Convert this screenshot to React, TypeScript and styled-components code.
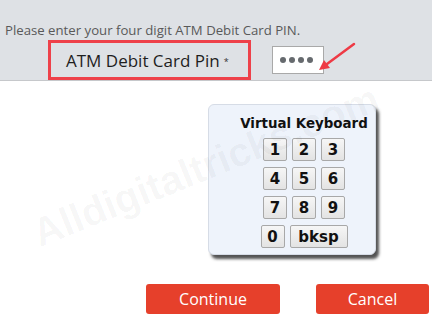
import styled, { createGlobalStyle } from "styled-components";

const GlobalStyle = createGlobalStyle`
    html, body {
        margin: 0;
        padding: 0;
        background: #ffffff;
    }
    body {
        font-family: "Open Sans", "Noto Sans", sans-serif;
    }
`

const Page = styled.div`
    position: relative;
    width: 432px;
    height: 333px;
    overflow: hidden;
    background: #ffffff;
`

// Cabecera gris con el texto y el campo del PIN

const Header = styled.div`
    position: relative;
    height: 81px;
    box-sizing: border-box;
    padding: 21px 0 0 5px;
    background: #dee1e5;
    border-bottom: 1px solid #c6c8cb;
`

const Hint = styled.div`
    font-size: 13.2px;
    line-height: 18px;
    color: #595959;
    white-space: nowrap;
`

const PinRow = styled.div`
    display: flex;
    align-items: center;
    margin: 1px 0 0 43px;
`

const LabelBox = styled.div`
    display: flex;
    align-items: flex-start;
    box-sizing: border-box;
    width: 203px;
    height: 40px;
    padding: 8px 0 0 15px;
    border: 3px solid #ee414a;
`

const Label = styled.span`
    font-size: 17px;
    line-height: 20px;
    color: #1e1e1e;
`

const Required = styled.span`
    font-size: 9px;
    line-height: 9px;
    margin: 6px 0 0 4px;
    color: #333;
`

const PinInput = styled.div`
    display: flex;
    align-items: center;
    gap: 3px;
    box-sizing: border-box;
    width: 52px;
    height: 28px;
    margin-left: 21px;
    padding-left: 7px;
    background: #ffffff;
    border: 1px solid #a9a9a9;
`

const Dot = styled.span`
    width: 6px;
    height: 6px;
    border-radius: 50%;
    background: #666a6e;
`

const Arrow = styled.svg`
    position: absolute;
    left: 310px;
    top: 38px;
    width: 50px;
    height: 40px;
    overflow: visible;
`

// Cuerpo con el teclado virtual y los botones

const Body = styled.div`
    padding: 23px 0 0 208px;
`

const Keyboard = styled.div`
    box-sizing: border-box;
    width: 168px;
    height: 151px;
    padding: 11px 0 0 24px;
    display: flex;
    flex-direction: column;
    align-items: center;
    background: #eef3fb;
    border: 1px solid #d6dce6;
    border-radius: 6px;
    box-shadow: 3px 4px 3px rgba(40, 40, 40, 0.8);
    font-family: "DejaVu Sans", Verdana, sans-serif;
`

const KeyboardTitle = styled.div`
    font-size: 13.4px;
    font-weight: bold;
    line-height: 16px;
    color: #111;
    margin-bottom: 6px;
`

const KeyRow = styled.div`
    display: flex;
    gap: 5px;
    margin-bottom: 6px;
`

const Key = styled.button<{ wide?: boolean }>`
    box-sizing: border-box;
    width: ${(props) => (props.wide ? "58px" : "24px")};
    height: 23px;
    padding: 0;
    font-family: "DejaVu Sans", Verdana, sans-serif;
    font-size: 15px;
    font-weight: bold;
    color: #111;
    background: linear-gradient(#f6f6f6, #e3e3e3);
    border: 1px solid #a8a8a8;
    border-radius: 2px;
`

const Actions = styled.div`
    display: flex;
    gap: 36px;
    margin: 29px 0 0 -62px;
`

const ActionButton = styled.button<{ width: number }>`
    width: ${(props) => props.width}px;
    height: 30px;
    padding: 0;
    font-family: "Open Sans", "Noto Sans", sans-serif;
    font-size: 16px;
    color: #ffffff;
    background: #e6402b;
    border: none;
    border-radius: 3px;
`

const Watermark = styled.div`
    position: absolute;
    left: 42px;
    top: 213px;
    transform: rotate(-22deg);
    transform-origin: left bottom;
    font-family: "Liberation Sans", Arial, sans-serif;
    font-size: 40px;
    font-weight: bold;
    line-height: 40px;
    color: rgba(0, 0, 0, 0.04);
    white-space: nowrap;
    pointer-events: none;
`

const rows = [
    ["1", "2", "3"],
    ["4", "5", "6"],
    ["7", "8", "9"],
]

const App = () => {
    return (
        <Page>
            <GlobalStyle />
            <Header>
                <Hint>Please enter your four digit ATM Debit Card PIN.</Hint>
                <PinRow>
                    <LabelBox>
                        <Label>ATM Debit Card Pin</Label>
                        <Required>*</Required>
                    </LabelBox>
                    <PinInput>
                        <Dot />
                        <Dot />
                        <Dot />
                        <Dot />
                    </PinInput>
                </PinRow>
                <Arrow viewBox="310 38 50 40">
                    <line x1="354" y1="44" x2="327" y2="64" stroke="#ee3a45" strokeWidth="2.5" strokeLinecap="round" />
                    <polygon points="319,70 330,68 324,60" fill="#ee3a45" />
                </Arrow>
            </Header>
            <Body>
                <Keyboard>
                    <KeyboardTitle>Virtual Keyboard</KeyboardTitle>
                    {rows.map((row) => (
                        <KeyRow key={row[0]}>
                            {row.map((k) => (
                                <Key key={k}>{k}</Key>
                            ))}
                        </KeyRow>
                    ))}
                    <KeyRow>
                        <Key>0</Key>
                        <Key wide>bksp</Key>
                    </KeyRow>
                </Keyboard>
                <Actions>
                    <ActionButton width={134}>Continue</ActionButton>
                    <ActionButton width={113}>Cancel</ActionButton>
                </Actions>
            </Body>
            <Watermark>Alldigitaltricks.com</Watermark>
        </Page>
    )
}

export default App;
